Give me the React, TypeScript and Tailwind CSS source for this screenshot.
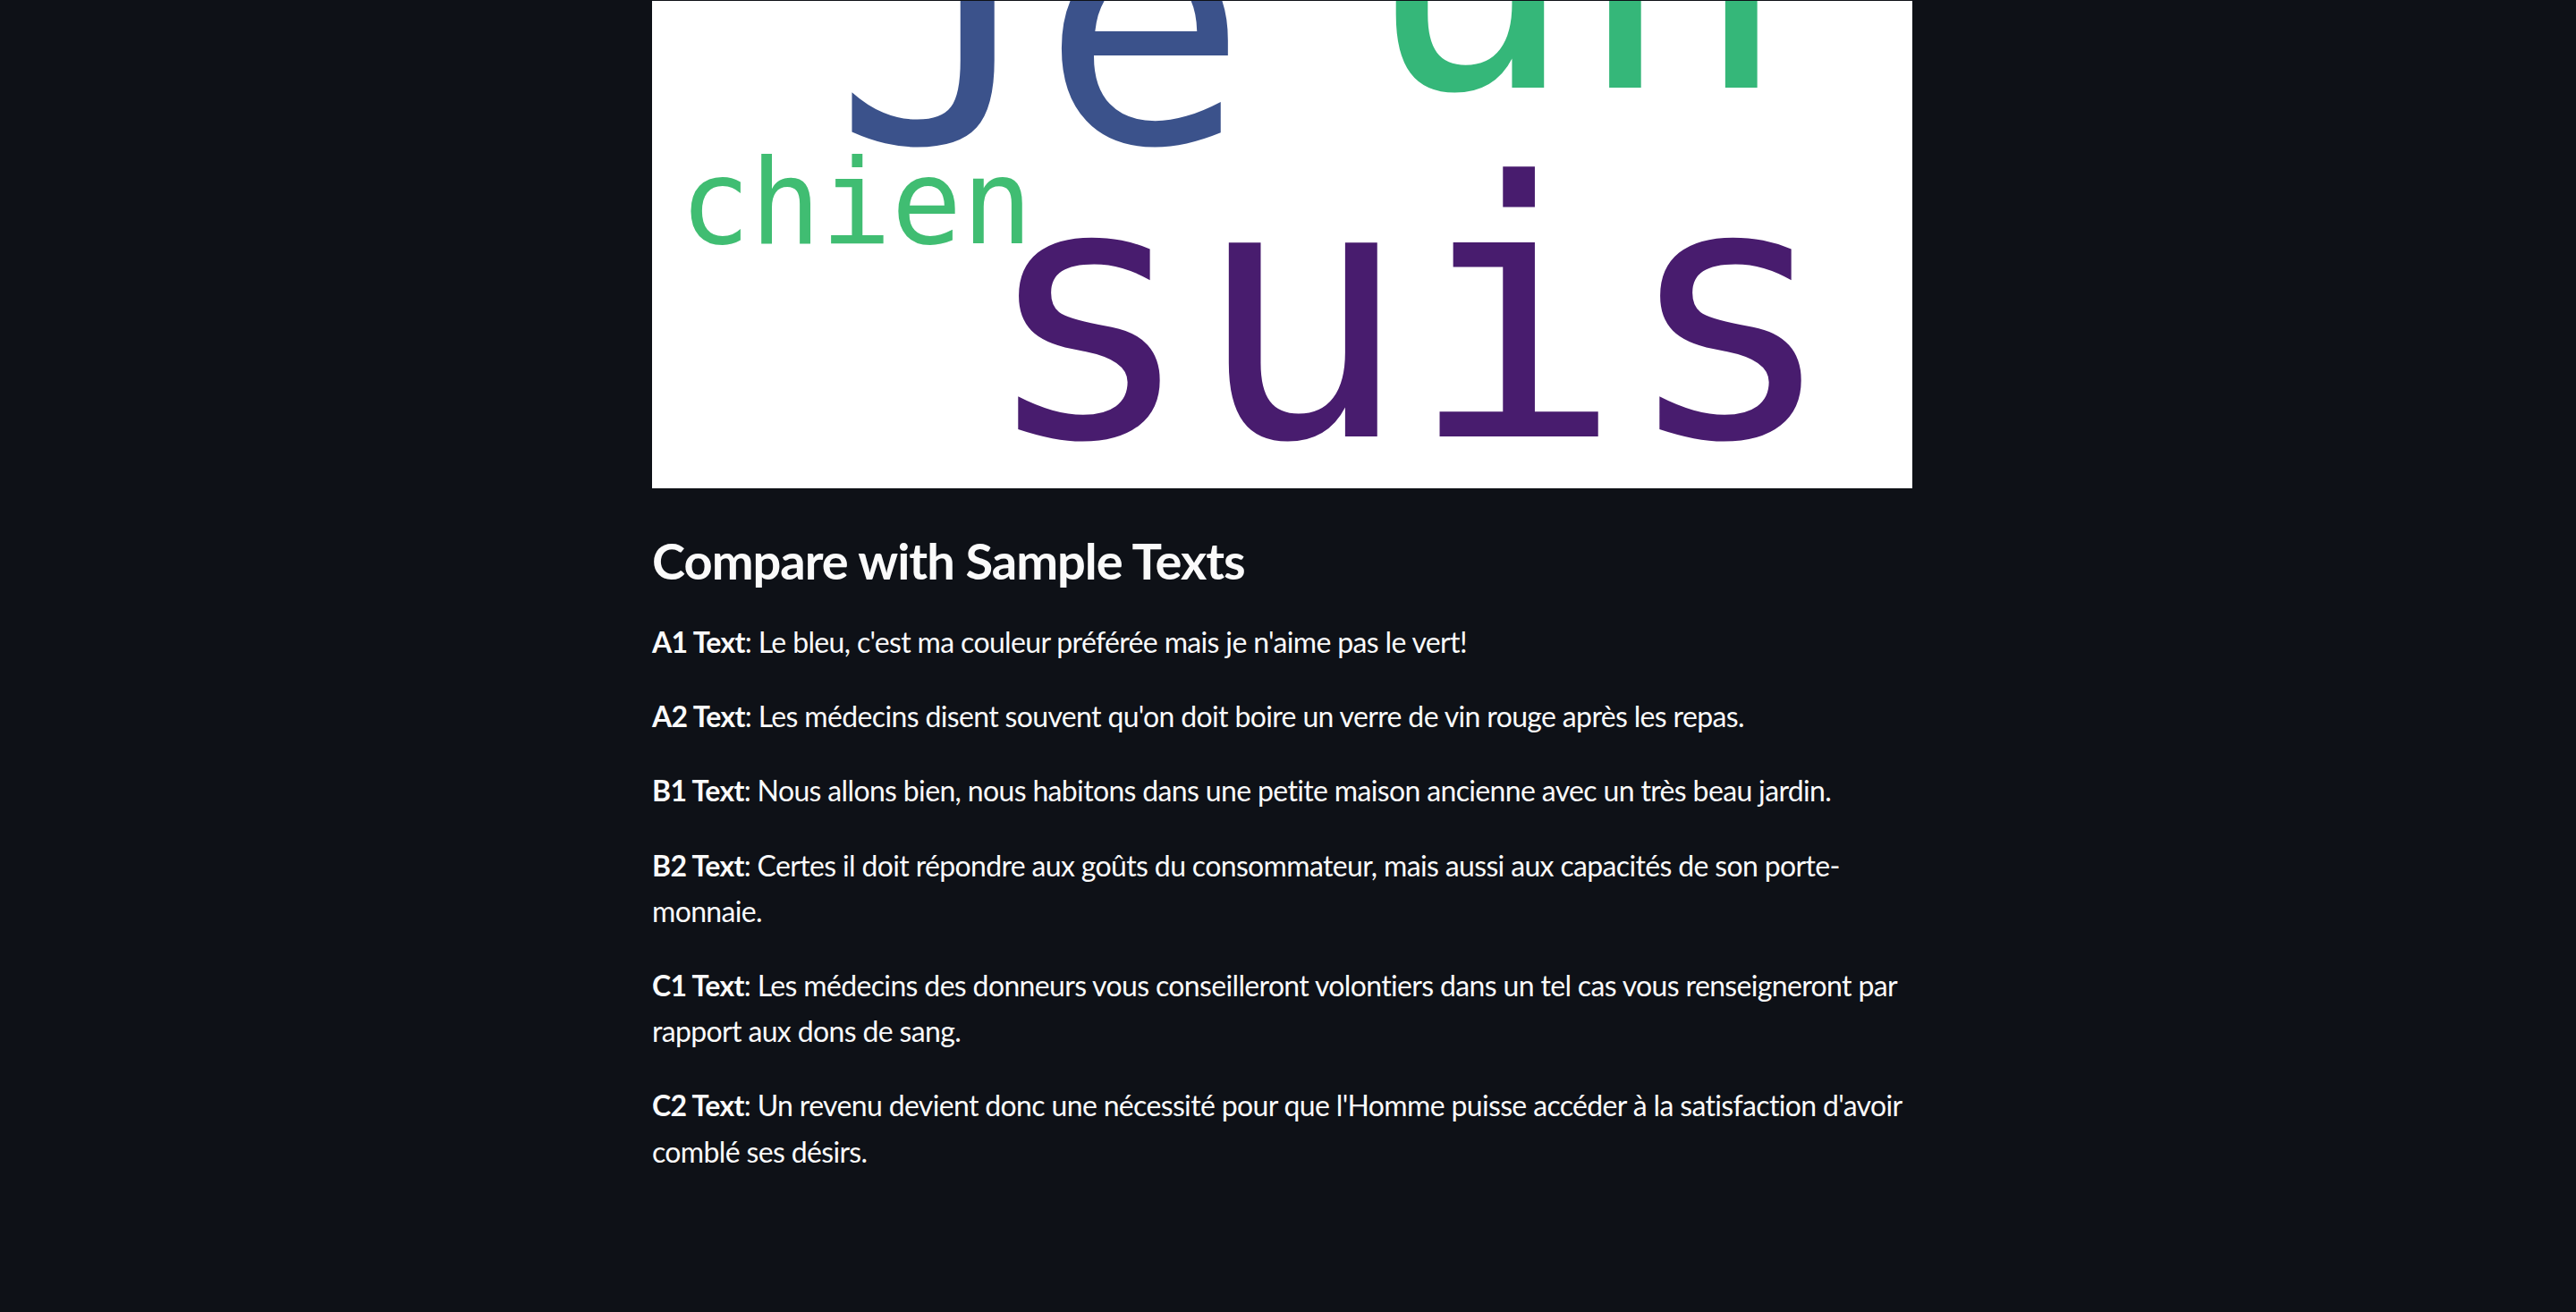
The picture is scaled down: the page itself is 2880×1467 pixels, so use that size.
const samples = [
  { level: "A1", text: "Le bleu, c'est ma couleur préférée mais je n'aime pas le vert!" },
  { level: "A2", text: "Les médecins disent souvent qu'on doit boire un verre de vin rouge après les repas." },
  { level: "B1", text: "Nous allons bien, nous habitons dans une petite maison ancienne avec un très beau jardin." },
  { level: "B2", text: "Certes il doit répondre aux goûts du consommateur, mais aussi aux capacités de son porte-monnaie." },
  { level: "C1", text: "Les médecins des donneurs vous conseilleront volontiers dans un tel cas vous renseigneront par rapport aux dons de sang." },
  { level: "C2", text: "Un revenu devient donc une nécessité pour que l'Homme puisse accéder à la satisfaction d'avoir comblé ses désirs." },
];

function WordCloud() {
  return (
    <svg
      className="block w-full h-[545px] bg-white"
      viewBox="0 0 1409 545"
      xmlns="http://www.w3.org/2000/svg"
      style={{ fontFamily: '"DejaVu Sans Mono", monospace' }}
    >
      <text x="203" y="158" fontSize="385" fill="#3b528b">Je</text>
      <text x="794" y="97" fontSize="396" fill="#35b779">un</text>
      <text x="31" y="271" fontSize="131" fill="#40bd72">chien</text>
      <text x="368" y="487" fontSize="397" fill="#481c6e">suis</text>
    </svg>
  );
}

export default function App() {
  return (
    <div className="min-h-screen bg-[#0e1117] text-[#fafafa] font-['Lato',sans-serif] pr-[13px]">
      <div className="w-[1409px] mx-auto pt-px pb-40">
        <WordCloud />

        <h3 className="mt-[47px] text-[56px] leading-[67px] font-bold tracking-[-1px]">
          Compare with Sample Texts
        </h3>

        <div className="mt-[32px] flex flex-col gap-[32px] text-[32px] leading-[51.2px] tracking-[-0.65px]">
          {samples.map((s) => (
            <p key={s.level}>
              <span className="font-bold">{s.level} Text</span>: {s.text}
            </p>
          ))}
        </div>
      </div>
    </div>
  );
}
